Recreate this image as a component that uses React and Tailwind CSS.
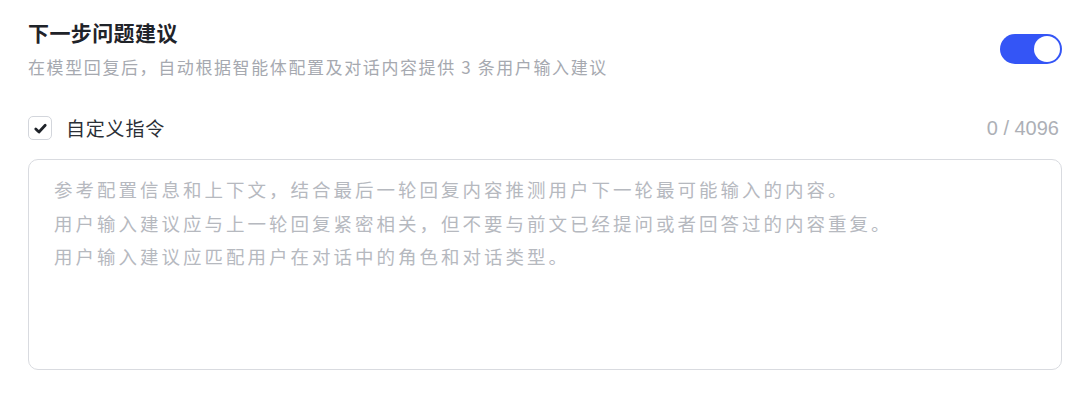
import { useState } from 'react';

const font = { fontFamily: '"Noto Sans CJK SC", "Noto Sans", sans-serif' };

export default function App() {
  const [enabled, setEnabled] = useState(true);
  const [custom, setCustom] = useState(true);
  const [text, setText] = useState('');

  const placeholder =
    '参考配置信息和上下文，结合最后一轮回复内容推测用户下一轮最可能输入的内容。\n' +
    '用户输入建议应与上一轮回复紧密相关，但不要与前文已经提问或者回答过的内容重复。\n' +
    '用户输入建议应匹配用户在对话中的角色和对话类型。';

  return (
    <div className="w-[1080px] h-[410px] bg-white pl-[28px] pr-[18px] pt-[17px]" style={font}>
      <div className="flex items-center justify-between">
        <div>
          <h2 className="text-[21px] leading-[30px] font-semibold text-[#1f2329] tracking-[0.4px]">
            下一步问题建议
          </h2>
          <p className="mt-[7px] text-[17px] leading-[26px] text-[#a6a9b0] tracking-[1.6px]">
            在模型回复后，自动根据智能体配置及对话内容提供 3 条用户输入建议
          </p>
        </div>
        <button
          onClick={() => setEnabled(!enabled)}
          className={
            'w-[62px] h-[30px] rounded-full p-[2px] flex ' +
            (enabled ? 'bg-[#3455f6] justify-end' : 'bg-[#d0d3d9] justify-start')
          }
        >
          <span className="w-[26px] h-[26px] rounded-full bg-white block" />
        </button>
      </div>

      <div className="mt-[36px] flex items-center justify-between">
        <label className="flex items-center gap-[14px] cursor-pointer">
          <button
            onClick={() => setCustom(!custom)}
            className="w-[24px] h-[24px] rounded-[5px] border border-[#d3d6dc] flex items-center justify-center bg-white"
          >
            {custom && (
              <svg width="15" height="15" viewBox="0 0 14 14" fill="none">
                <path
                  d="M2.6 7.4 L5.6 10.2 L11.4 4"
                  stroke="#1f2329"
                  strokeWidth="2.6"
                  strokeLinecap="round"
                  strokeLinejoin="round"
                />
              </svg>
            )}
          </button>
          <span className="text-[19px] leading-[24px] text-[#2b2f36] tracking-[0.8px]">自定义指令</span>
        </label>
        <span
          className="text-[20px] leading-[24px] text-[#adb0b6] pr-[3px]"
          style={{ fontFamily: '"Liberation Sans", Arial, sans-serif' }}
        >
          {text.length} / 4096
        </span>
      </div>

      <textarea
        value={text}
        onChange={(e) => setText(e.target.value)}
        placeholder={placeholder}
        className="mt-[19px] block w-full h-[211px] resize-none rounded-[10px] border border-[#d9dbe0] pl-[25px] pr-[20px] pt-[13px] text-[18.5px] leading-[33.5px] tracking-[3px] text-[#2b2f36] placeholder:text-[#b6b9bf] outline-none"
        style={font}
      />
    </div>
  );
}
